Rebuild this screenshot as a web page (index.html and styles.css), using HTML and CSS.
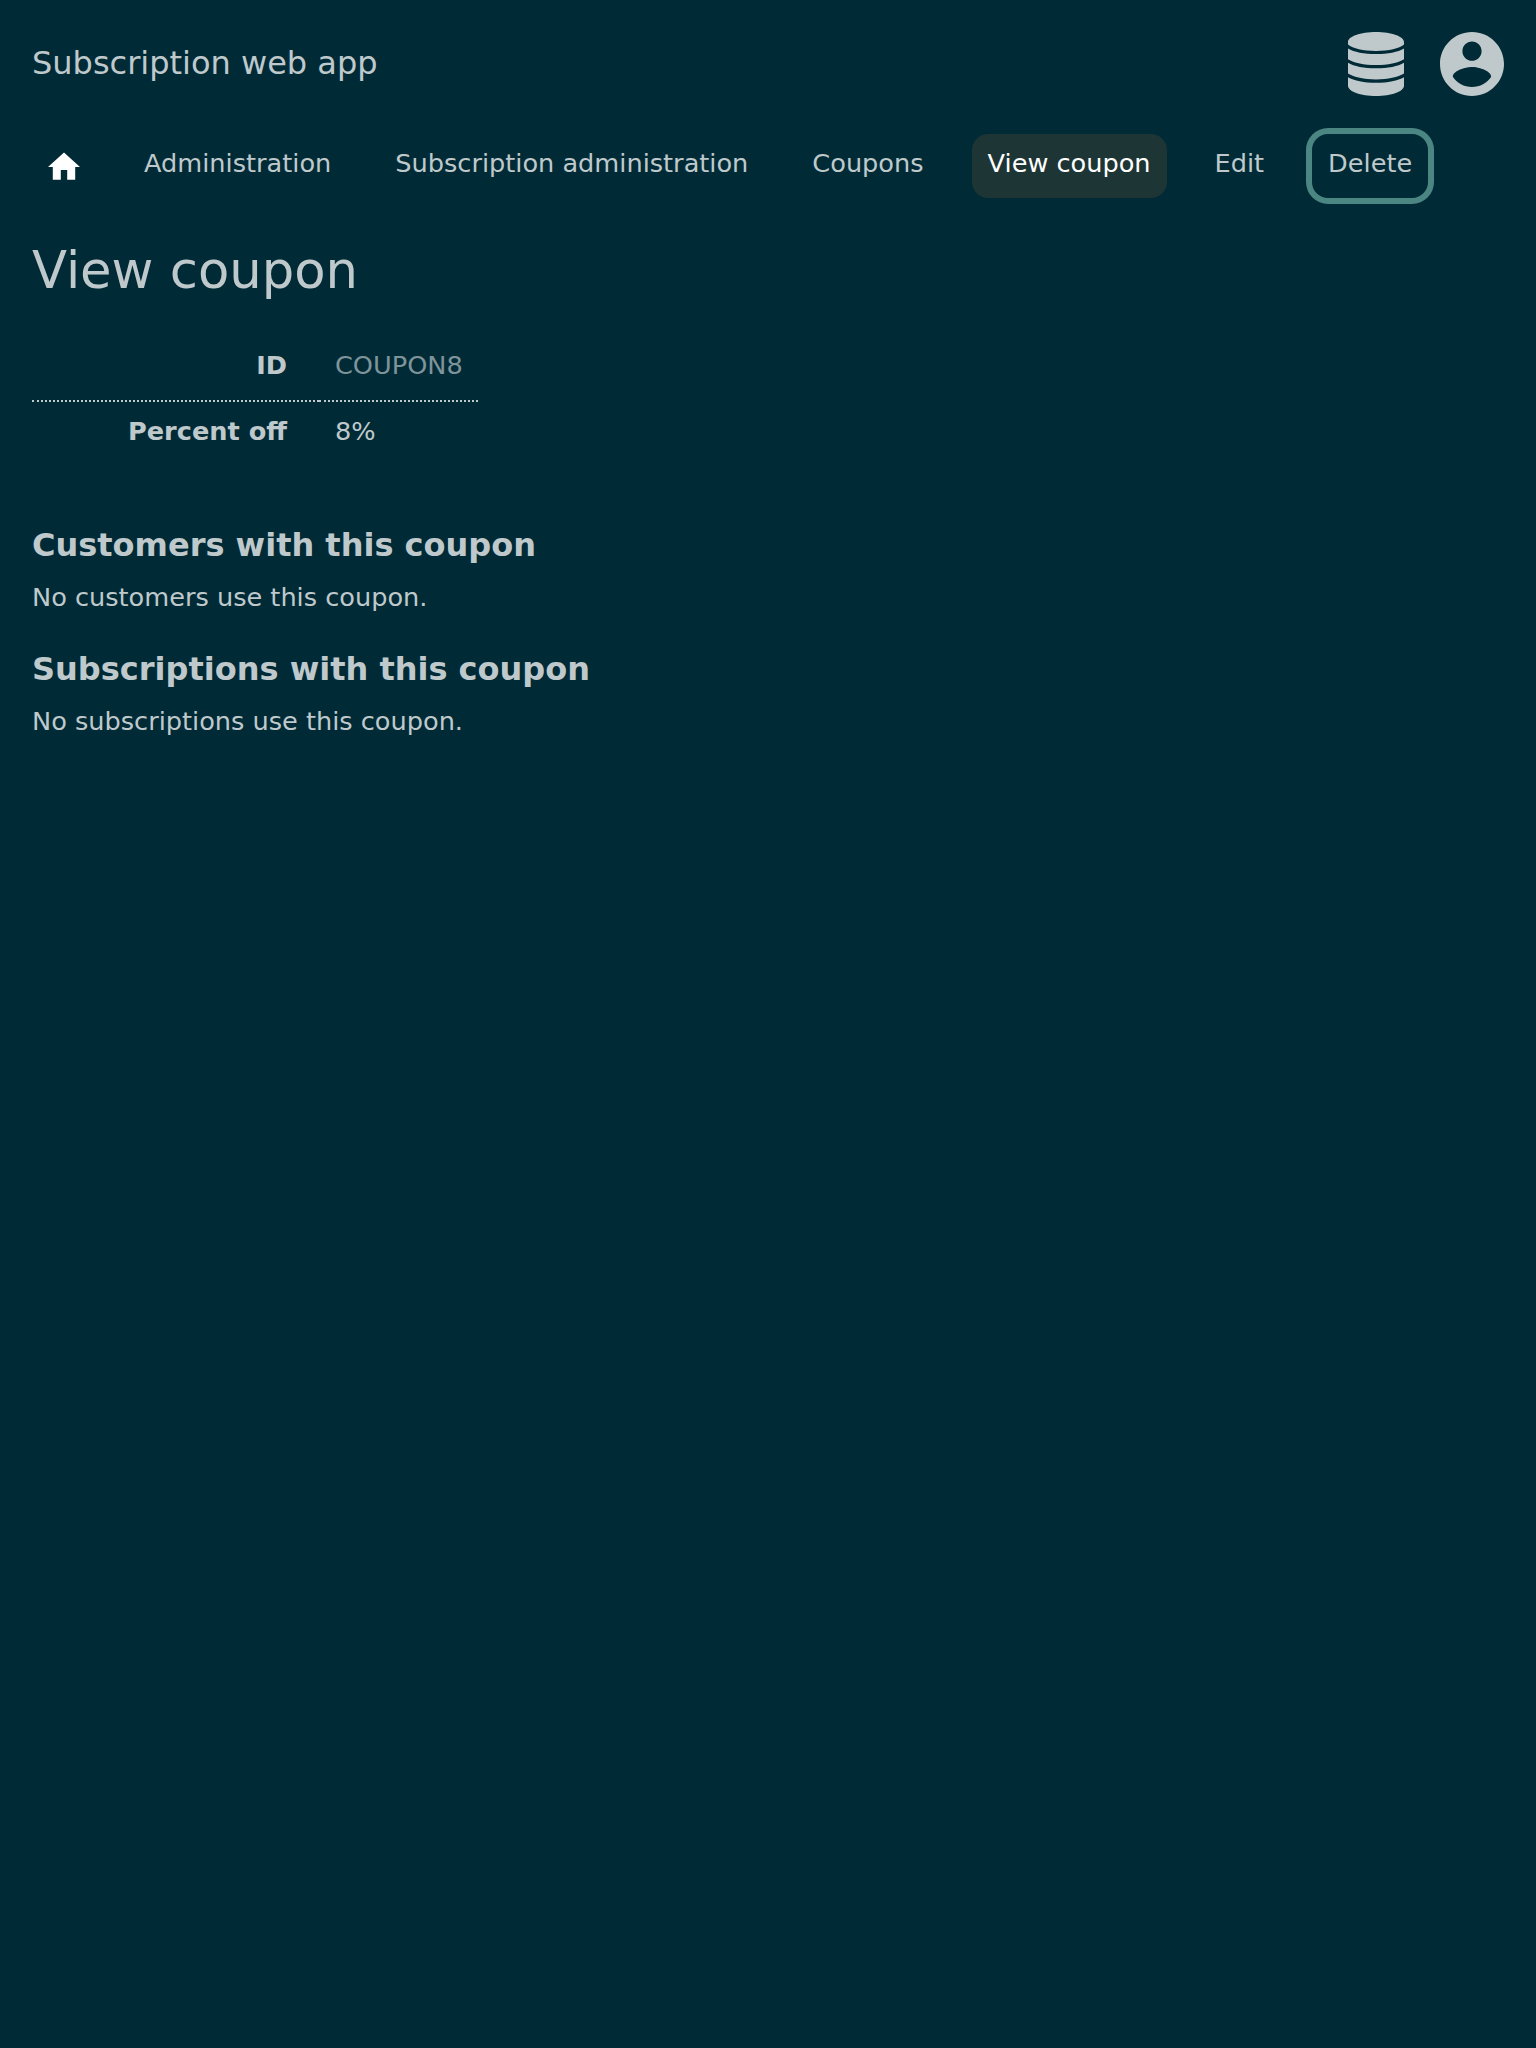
FILE: index.html
```html
<!DOCTYPE html>
<html lang="en">
<head>
<meta charset="utf-8">
<title>View coupon</title>
<link rel="stylesheet" href="styles.css">
</head>
<body>
<header class="header">
  <div class="title">Subscription web app</div>
  <div class="menus">
    <svg class="db" viewBox="0 0 56 64"><path d="M28 0C43.500 0 56 4.300 56 10.200V12.500C51 16.600 41 18.900 28 18.900S5 16.600 0 12.500V10.200C0 4.300 12.500 0 28 0ZM0 16.400C6 20 16 22 28 22S50 20 56 16.400V27.200C50 31 40 33.100 28 33.100S6 31 0 27.200ZM0 30.700C6 34.300 16 36.300 28 36.300S50 34.300 56 30.700V41.600C50 45.300 40 47.500 28 47.500S6 45.300 0 41.600ZM0 45.200C6 48.700 16 50.700 28 50.700S50 48.700 56 45.200V53.800C56 59.600 43.500 64 28 64S0 59.600 0 53.800Z"/></svg>
    <svg class="account" viewBox="2 2 20 20"><path d="M12 2C6.480 2 2 6.480 2 12s4.480 10 10 10 10-4.480 10-10S17.520 2 12 2zm0 3c1.660 0 3 1.340 3 3s-1.340 3-3 3-3-1.340-3-3 1.340-3 3-3zm0 14.200c-2.500 0-4.710-1.280-6-3.220.030-1.990 4-3.080 6-3.080 1.990 0 5.970 1.090 6 3.080-1.290 1.940-3.500 3.220-6 3.220z"/></svg>
  </div>
</header>
<nav class="nav">
  <a class="link home"><svg viewBox="2 2.700 20 17.500"><path d="M10 20v-6h4v6h5v-8h3L12 3 2 12h3v8z"/></svg></a>
  <a class="link">Administration</a>
  <a class="link">Subscription administration</a>
  <a class="link">Coupons</a>
  <a class="link current">View coupon</a>
  <a class="link">Edit</a>
  <a class="link focused">Delete</a>
</nav>
<main>
  <h1>View coupon</h1>
  <table class="details">
    <tr><th>ID</th><td class="muted">COUPON8</td></tr>
    <tr><th>Percent off</th><td>8%</td></tr>
  </table>
  <h2>Customers with this coupon</h2>
  <p>No customers use this coupon.</p>
  <h2>Subscriptions with this coupon</h2>
  <p>No subscriptions use this coupon.</p>
</main>
</body>
</html>
```
FILE: styles.css
```css
body {
  margin: 0;
  padding: 32px;
  background: #002b36;
  color: #bfc9cc;
  font: 25.6px/32px "DejaVu Sans", sans-serif;
}
.header {
  display: flex;
  justify-content: space-between;
  align-items: center;
  height: 64px;
}
.title { font-size: 32px; padding-bottom: 2px; }
.menus { display: flex; gap: 36px; fill: #bfc9cc; }
.db { width: 56px; height: 64px; }
.account { width: 64px; height: 64px; }
.nav { display: flex; gap: 32px; margin-top: 38px; }
.link {
  box-sizing: border-box;
  height: 64px;
  padding: 13px 16px;
  border-radius: 16px;
}
.home svg {
  display: block;
  width: 32px;
  height: 28px;
  margin-top: 5px;
  fill: #fff;
}
.current { background: #1e3535; color: #fff; }
.focused { box-shadow: 0 0 0 6px #4b8683; }
h1 {
  margin: 40px 0 0;
  font-size: 51.2px;
  line-height: 64px;
  font-weight: 400;
}
.details { margin: 33px 0 60px; border-collapse: collapse; }
th, td { padding: 14px 15px 19px 16px; text-align: left; }
th { padding: 14px 32px 19px 96px; text-align: right; }
tr + tr th, tr + tr td { padding-top: 13px; padding-bottom: 18px; border-top: 2px dotted #bfc9cc; }
.muted { color: #7f949a; }
h2 { margin: 0 0 16px; font-size: 32px; line-height: 40px; }
p { margin: 0 0 36px; }
```
